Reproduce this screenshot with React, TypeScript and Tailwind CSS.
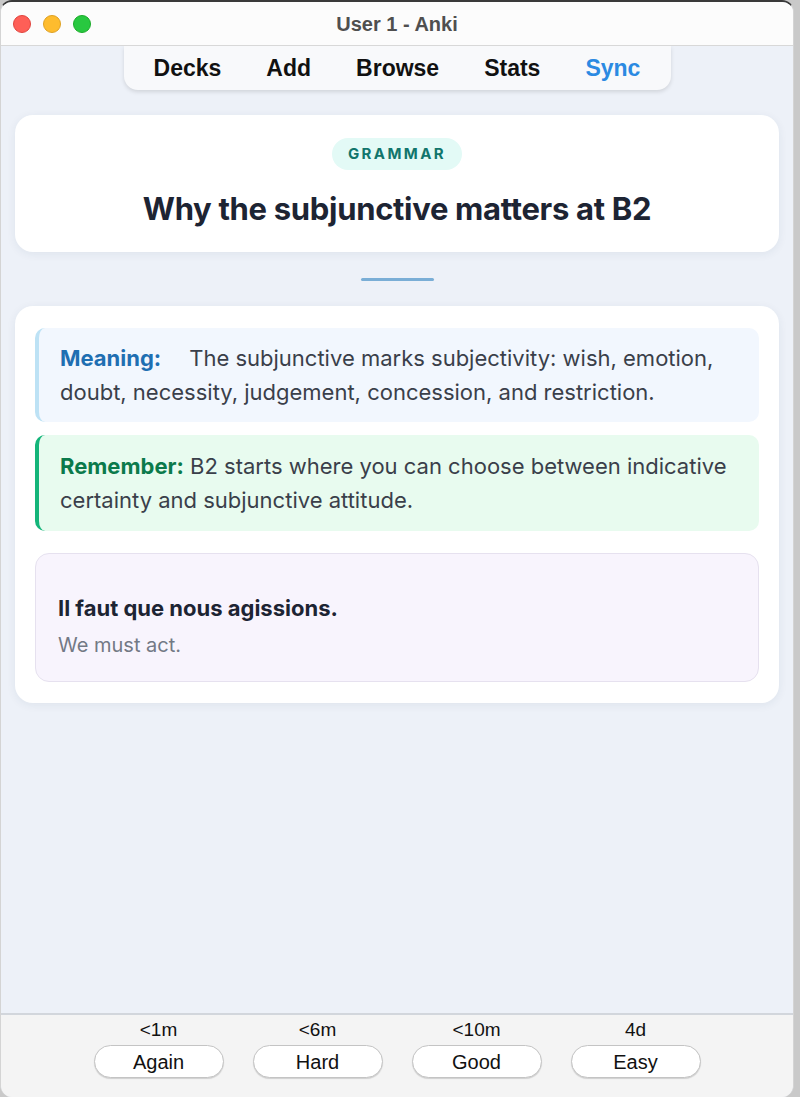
import React from "react";

const navItems = ["Decks", "Add", "Browse", "Stats", "Sync"];

const answers = [
  { time: "<1m", label: "Again" },
  { time: "<6m", label: "Hard" },
  { time: "<10m", label: "Good" },
  { time: "4d", label: "Easy" },
];

function TrafficLights() {
  return (
    <div className="flex items-center gap-[12px] pl-[12px]">
      <span className="block h-[18px] w-[18px] rounded-full bg-[#fe5f57] border border-[#e0443e]" />
      <span className="block h-[18px] w-[18px] rounded-full bg-[#febc2e] border border-[#dea123]" />
      <span className="block h-[18px] w-[18px] rounded-full bg-[#28c840] border border-[#1aab29]" />
    </div>
  );
}

export default function App() {
  return (
    <div className="w-[800px] h-[1097px] bg-[#c9c9c9] overflow-hidden">
      <div
        className="relative flex h-[1097px] w-[794px] flex-col overflow-hidden rounded-[12px] border-t-[2px] border-t-[#3a3a3a] bg-[#edf1f8] border-x border-x-[#d4d4d4]"
        style={{ fontFamily: "Inter, 'Liberation Sans', sans-serif" }}
      >
        {/* title bar */}
        <div className="relative flex h-[44px] shrink-0 items-center border-b border-[#d8d8d8] bg-[#fcfcfc]">
          <TrafficLights />
          <div
            className="absolute inset-x-0 top-0 flex h-[44px] items-center justify-center text-[20px] font-bold text-[#4f4f4f]"
            style={{ fontFamily: "'Liberation Sans', Arial, sans-serif" }}
          >
            User 1 - Anki
          </div>
        </div>

        {/* toolbar */}
        <div className="flex shrink-0 justify-center">
          <nav
            className="flex h-[44px] w-[547px] items-center justify-center gap-[45px] rounded-b-[14px] bg-[#f8f9fb] shadow-[0_2px_4px_rgba(0,0,0,0.12)] text-[23px] font-bold text-[#111]"
            style={{ fontFamily: "'Liberation Sans', Arial, sans-serif" }}
          >
            {navItems.map((n) => (
              <span key={n} className={n === "Sync" ? "text-[#2b8ae2]" : ""}>
                {n}
              </span>
            ))}
          </nav>
        </div>

        {/* card area */}
        <div className="flex flex-1 flex-col px-[14px] pt-[25px]">
          <section className="flex h-[137px] flex-col items-center rounded-[18px] bg-white pt-[23px] shadow-[0_2px_10px_rgba(30,50,90,0.07)]">
            <span className="flex h-[32px] items-center rounded-full bg-[#e3faf6] px-[16px] text-[15px] font-bold tracking-[0.16em] text-[#11756c]">
              GRAMMAR
            </span>
            <h1 className="mt-[19px] text-[31px] font-bold leading-[40px] tracking-[-0.01em] text-[#1d2433]">
              Why the subjunctive matters at B2
            </h1>
          </section>

          <div className="flex justify-center pt-[26px] pb-[25px]">
            <div className="h-[3px] w-[73px] rounded-full bg-[#7aaed6]" />
          </div>

          <section className="flex flex-col rounded-[18px] bg-white px-[20px] pt-[22px] pb-[21px] shadow-[0_2px_10px_rgba(30,50,90,0.07)]">
            <p className="rounded-[10px] border-l-[4px] border-[#bde2f5] bg-[#f2f7fe] py-[13px] pl-[21px] pr-[14px] text-[22px] leading-[34px] text-[#3a3f4a]">
              <strong className="mr-[28px] font-bold text-[#1f6fb2]">Meaning:</strong>
              <span>The subjunctive marks subjectivity: wish, emotion, doubt, necessity, judgement, concession, and restriction.</span>
            </p>

            <p className="mt-[13px] rounded-[10px] border-l-[4px] border-[#14b57a] bg-[#e8fbef] py-[14px] pl-[21px] pr-[14px] text-[22px] leading-[34px] text-[#3a3f4a]">
              <strong className="font-bold text-[#0b7a4b]">Remember:</strong>{" "}
              <span>B2 starts where you can choose between indicative certainty and subjunctive attitude.</span>
            </p>

            <div className="mt-[22px] flex h-[129px] flex-col rounded-[14px] border border-[#e6e1ef] bg-[#f8f4fd] pl-[22px] pt-[39px]">
              <div className="text-[22px] font-bold leading-[30px] text-[#1d2433]">Il faut que nous agissions.</div>
              <div className="mt-[9px] text-[20px] leading-[26px] text-[#737985]">We must act.</div>
            </div>
          </section>
        </div>

        {/* answer bar */}
        <div
          className="flex h-[84px] shrink-0 justify-center gap-[29px] border-t-[2px] border-[#d2d6dc] bg-[#f4f4f4] pt-[4px]"
          style={{ fontFamily: "'Liberation Sans', Arial, sans-serif" }}
        >
          {answers.map((a) => (
            <div key={a.label} className="flex w-[130px] flex-col items-center">
              <span className="text-[19px] leading-[22px] text-[#111]">{a.time}</span>
              <button className="mt-[4px] flex h-[33px] w-[130px] items-center justify-center rounded-full border border-[#c4c4c4] bg-white text-[20px] text-[#111] shadow-[0_1px_1px_rgba(0,0,0,0.15)]">
                {a.label}
              </button>
            </div>
          ))}
        </div>
      </div>
    </div>
  );
}
